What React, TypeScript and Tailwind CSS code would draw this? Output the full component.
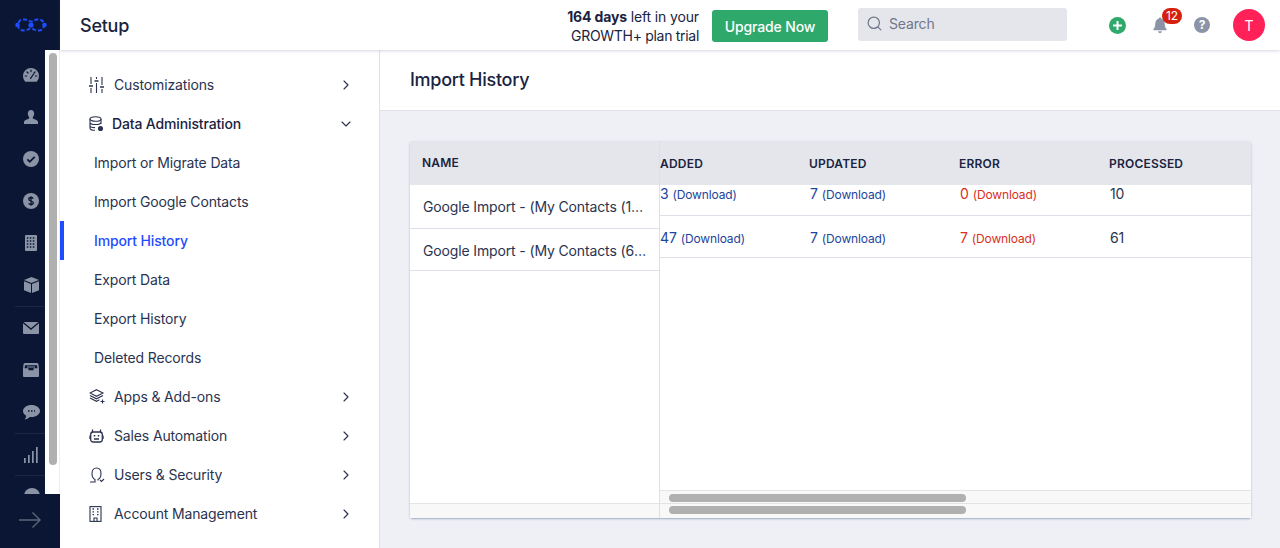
import React from 'react';
import { ChevronDown, ChevronRight, Search } from 'lucide-react';

const ICON = '#8b93a6';
const LINE = '#2a3350';

const GaugeIcon = () => (
  <svg width="16" height="14" viewBox="0 0 16 14">
    <path fill={ICON} d="M8 0a8 8 0 0 0-8 8c0 2.200.9 4.200 2.300 5.700h11.400A8 8 0 0 0 16 8a8 8 0 0 0-8-8z" />
    <path stroke="#0a1633" strokeWidth="1.200" fill="none" strokeLinecap="round" d="M8 2.200v1.400M4 4l1 1M12 4l-1 1M2.200 8h1.400M12.400 8h1.400M7.600 10.400l3-4.400" />
  </svg>
);
const UserIcon = () => (
  <svg width="14" height="14" viewBox="0 0 14 14">
    <path fill={ICON} d="M7 0C5 0 3.800 1.500 3.800 3.600c0 1.500.6 2.900 1.400 3.600v1.200L1.600 10C.6 10.500 0 11.300 0 12.200V14h14v-1.800c0-.9-.6-1.700-1.600-2.200L8.800 8.400V7.200c.8-.7 1.400-2.100 1.400-3.600C10.200 1.500 9 0 7 0z" />
  </svg>
);
const CheckIcon = () => (
  <svg width="16" height="16" viewBox="0 0 16 16">
    <circle cx="8" cy="8" r="8" fill={ICON} />
    <path d="M4.300 8.300l2.500 2.400 4.900-4.900" stroke="#0a1633" strokeWidth="1.700" fill="none" />
  </svg>
);
const DollarIcon = () => (
  <svg width="16" height="16" viewBox="0 0 16 16">
    <circle cx="8" cy="8" r="8" fill={ICON} />
    <path d="M10.200 5.600C9.800 4.800 9 4.500 8 4.500c-1.200 0-2.200.6-2.200 1.700 0 2.300 4.500 1.300 4.500 3.600 0 1.100-1 1.700-2.300 1.700-1.100 0-1.900-.4-2.300-1.200M8 3.200v9.600" stroke="#0a1633" strokeWidth="1.300" fill="none" />
  </svg>
);
const BuildingIcon = () => (
  <svg width="12" height="16" viewBox="0 0 12 16">
    <rect width="12" height="16" rx="1" fill={ICON} />
    <path stroke="#0a1633" strokeWidth="1.300" strokeDasharray="1.500 1.500" d="M1.800 3h9M1.800 6h9M1.800 9h9M1.800 12h9" />
  </svg>
);
const CubeIcon = () => (
  <svg width="15" height="16" viewBox="0 0 15 16">
    <path fill={ICON} d="M7.500 0L15 3 7.500 6 0 3z" />
    <path fill={ICON} d="M0 4.200l7 2.800v9L0 13.200zM15 4.200L8 7v9l7-2.800z" />
  </svg>
);
const MailIcon = () => (
  <svg width="16" height="12" viewBox="0 0 16 12">
    <path fill={ICON} d="M.6 0h14.800L8 6.300zM0 1.300l8 6.800 8-6.800V11a1 1 0 0 1-1 1H1a1 1 0 0 1-1-1z" />
  </svg>
);
const InboxIcon = () => (
  <svg width="16" height="14" viewBox="0 0 16 14">
    <path fill={ICON} d="M2 0h12a1.500 1.500 0 0 1 1.500 1.500L16 6v7a1 1 0 0 1-1 1H1a1 1 0 0 1-1-1V6l.5-4.500A1.500 1.500 0 0 1 2 0z" />
    <path fill="#0a1633" d="M2 2.200h12l.4 3H10.500v2h-5v-2H1.600z" />
    <path fill={ICON} d="M4 3.500h8v1H4z" />
  </svg>
);
const ChatIcon = () => (
  <svg width="17" height="15" viewBox="0 0 17 15">
    <path fill={ICON} d="M8.500 0C3.800 0 0 2.700 0 6c0 1.900 1.300 3.600 3.200 4.700-.1 1.400-.8 2.700-1.600 3.800 1.700-.2 3.700-1.200 5.100-2.600.6.100 1.200.1 1.800.1 4.700 0 8.500-2.700 8.500-6S13.200 0 8.500 0z" />
    <path stroke="#0a1633" strokeWidth="1.500" strokeDasharray="1.500 1.500" d="M5 6h7" />
  </svg>
);
const BarsIcon = () => (
  <svg width="14" height="16" viewBox="0 0 14 16" fill={ICON}>
    <rect x="0" y="11" width="1.700" height="5" />
    <rect x="4" y="8" width="1.700" height="8" />
    <rect x="8" y="4" width="1.700" height="12" />
    <rect x="12" y="0" width="1.700" height="16" />
  </svg>
);

const Logo = () => (
  <svg width="32" height="16" viewBox="0 0 32 16" fill="none">
    <path stroke="#1f4cff" strokeWidth="2" strokeDasharray="4 2" d="M8 2.500h2c2.500 0 3.500 2 6 2s3.500-2 6-2h2c3 0 5 2.500 5 5.500s-2 5.500-5 5.500h-2c-2.500 0-3.500-2-6-2s-3.500 2-6 2H8c-3 0-5-2.500-5-5.500s2-5.500 5-5.500z" />
    <circle cx="2.500" cy="8" r="2.300" fill="#1f4cff" />
    <circle cx="16" cy="8" r="2.600" fill="#1f4cff" />
    <circle cx="29.500" cy="8" r="2.300" fill="#1f4cff" />
  </svg>
);

const SlidersIcon = () => (
  <svg width="15" height="16" viewBox="0 0 15 16" fill="none" stroke={LINE} strokeWidth="1.100">
    <path d="M2 0v7M2 11v5M7.500 0v2M7.500 6v10M13 0v8M13 12v4" />
    <path d="M0 9h4M5.500 4h4M11 10h4" strokeWidth="1.500" />
  </svg>
);
const DatabaseIcon = () => (
  <svg width="15" height="16" viewBox="0 0 15 16" fill="none" stroke={LINE} strokeWidth="1.100">
    <ellipse cx="6.500" cy="3" rx="5.500" ry="2.300" />
    <path d="M1 3v9c0 1.200 2.300 2.300 5 2.300M12 3v5M1 6.200c0 1.200 2.500 2.300 5.500 2.300s5.500-1.100 5.500-2.300M1 9.400c0 1.200 2.300 2.200 5 2.200" />
    <circle cx="11.500" cy="12.500" r="2" fill={LINE} />
  </svg>
);
const LayersPlusIcon = () => (
  <svg width="16" height="15" viewBox="0 0 16 15" fill="none" stroke={LINE} strokeWidth="1.100">
    <path d="M7.500.7L14 4 7.500 7.300 1 4z" />
    <path d="M1 6.500l6.500 3.300L14 6.500M1 9l6.500 3.300 3-1.500" />
    <path d="M13.500 10.500v4M11.500 12.500h4" />
  </svg>
);
const BotIcon = () => (
  <svg width="15" height="14" viewBox="0 0 15 14" fill="none" stroke={LINE} strokeWidth="1.300">
    <rect x="1.700" y="3" width="11.600" height="10" rx="2.500" />
    <path d="M3.500 3V.5M11.500 3V.5M0 6.500v3.500M15 6.500v3.500M5 10h5" />
    <path d="M5.500 6v1.500M9.500 6v1.500" strokeWidth="1.600" />
  </svg>
);
const UsersSecIcon = () => (
  <svg width="16" height="16" viewBox="0 0 16 16" fill="none" stroke={LINE} strokeWidth="1.100">
    <path d="M1 15h5v-2.500C4 11.500 3 9.500 3 6.500 3 3 5 1 7.500 1S12 3 12 6.500c0 3-1 5-3 6v1" />
    <path d="M11 13l1.500 1.500L15 12" />
  </svg>
);
const OfficeIcon = () => (
  <svg width="13" height="16" viewBox="0 0 13 16" fill="none" stroke={LINE} strokeWidth="1.100">
    <rect x="1" y=".6" width="11" height="14.800" />
    <path d="M3.500 3h1.500M8 3h1.500M3.500 5.800h1.500M8 5.800h1.500M3.500 8.600h1.500M8 8.600h1.500" strokeWidth="1.300" />
    <path d="M5 15.500v-3.500h3v3.500" />
  </svg>
);

type NavItem = { label: string; icon?: React.ReactNode; active?: boolean; open?: boolean };

const items: NavItem[] = [
  { label: 'Customizations', icon: <SlidersIcon /> },
  { label: 'Data Administration', icon: <DatabaseIcon />, open: true },
  { label: 'Import or Migrate Data' },
  { label: 'Import Google Contacts' },
  { label: 'Import History', active: true },
  { label: 'Export Data' },
  { label: 'Export History' },
  { label: 'Deleted Records' },
  { label: 'Apps & Add-ons', icon: <LayersPlusIcon /> },
  { label: 'Sales Automation', icon: <BotIcon /> },
  { label: 'Users & Security', icon: <UsersSecIcon /> },
  { label: 'Account Management', icon: <OfficeIcon /> },
];

const Rail = () => (
  <div className="flex w-[60px] shrink-0 flex-col bg-[#0a1633]">
    <div className="flex h-[50px] shrink-0 items-center pl-[15px]">
      <Logo />
    </div>
    <div className="flex h-[444px] shrink-0">
      <div className="flex w-[45px] flex-col overflow-hidden pt-[4px] pl-[15px]">
        {[<GaugeIcon />, <UserIcon />, <CheckIcon />, <DollarIcon />, <BuildingIcon />, <CubeIcon />].map((icon, i) => (
          <div key={i} className="flex h-[42px] shrink-0 items-center justify-center pl-[2px]">{icon}</div>
        ))}
        <div className="h-px shrink-0 bg-[#1c2740]" />
        {[<MailIcon />, <InboxIcon />, <ChatIcon />].map((icon, i) => (
          <div key={i} className="flex h-[42px] shrink-0 items-center justify-center pl-[2px]">{icon}</div>
        ))}
        <div className="h-px shrink-0 bg-[#1c2740]" />
        <div className="flex h-[41px] shrink-0 items-center justify-center pl-[2px]"><BarsIcon /></div>
        <div className="h-px shrink-0 bg-[#1c2740]" />
        <div className="mt-[12px] ml-[9px] h-4 w-4 shrink-0 rounded-full bg-[#8b93a6]" />
      </div>
      <div className="w-[15px] border-r border-[#eeeeee] bg-white pt-[3px] pl-[4px]">
        <div className="h-[412px] w-2 rounded bg-[#b0b0b0]" />
      </div>
    </div>
    <div className="flex flex-1 items-center pl-[19px] pb-[2px]">
      <svg width="22" height="16" viewBox="0 0 22 16" fill="none" stroke="#5d6679" strokeWidth="1.400">
        <path d="M0 8h21M13.500 .5L21 8l-7.500 7.500" />
      </svg>
    </div>
  </div>
);

const Sidebar = () => (
  <div className="w-[320px] shrink-0 border-r border-[#dfe1e8] bg-white pt-[15px] text-[14px] text-[#2a3350]">
    {items.map(item => (
      <div key={item.label} className={`relative flex h-[39px] items-center pr-[25px] ${item.icon ? 'pl-[29px]' : 'pl-[34px]'}`}>
        {item.active && <div className="absolute top-0 bottom-0 left-0 w-1 bg-[#1f4cff]" />}
        {item.icon && <span className="flex w-[25px] shrink-0">{item.icon}</span>}
        <span className={`${item.active ? 'font-medium text-[#1f4cff]' : ''} ${item.open ? '-ml-[2px] font-medium text-[#1a2340]' : ''}`}>{item.label}</span>
        {item.icon && (
          <span className="ml-auto">
            {item.open ? <ChevronDown size={16} strokeWidth={1.7} /> : <ChevronRight size={16} strokeWidth={1.7} />}
          </span>
        )}
      </div>
    ))}
  </div>
);

const Cell = ({ value, tone }: { value: string; tone: 'blue' | 'red' }) => (
  <div className={`flex items-baseline gap-[4px] ${tone === 'blue' ? 'text-[#1d459c]' : 'text-[#d9301e]'}`}>
    <span className="text-[14px]">{value}</span>
    <span className="text-[12px]">(Download)</span>
  </div>
);

const rows = [
  { added: '3', updated: '7', error: '0', processed: '10', h: 'h-[43px] pb-[2px]' },
  { added: '47', updated: '7', error: '7', processed: '61', h: 'h-[42px] pt-[2px]' },
];

const ScrollStrip = ({ className }: { className: string }) => (
  <div className={`shrink-0 border-t border-[#e3e4e8] bg-[#f8f8f8] pl-[9px] ${className}`}>
    <div className="h-2 w-[297px] rounded bg-[#b0b0b0]" />
  </div>
);

const HistoryTable = () => (
  <div className="flex h-[377px] rounded-[3px] bg-white shadow-[0_1px_2px_rgba(100,120,160,0.6)]">
    <div className="flex w-[250px] shrink-0 flex-col border-r border-[#dfe0e7]">
      <div className="flex h-[44px] shrink-0 items-center bg-[#e5e6ec] pl-3 text-[12px] font-semibold tracking-[0.2px] text-[#1a2340]">NAME</div>
      <div className="flex h-[44px] shrink-0 items-center border-b border-[#dfe0e7] pr-[11px] pl-[13px] text-[14px] text-[#2a3350]">
        <span className="truncate">Google Import - (My Contacts (1).csv)</span>
      </div>
      <div className="flex h-[42px] shrink-0 items-center border-b border-[#dfe0e7] pt-[1px] pr-[11px] pl-[13px] text-[14px] text-[#2a3350]">
        <span className="truncate">Google Import - (My Contacts (6).csv)</span>
      </div>
      <div className="flex-1" />
      <div className="h-[15px] shrink-0 border-t border-[#e3e4e8] bg-[#f8f8f8]" />
    </div>
    <div className="flex min-w-0 flex-1 flex-col">
      <div className="grid h-[44px] shrink-0 grid-cols-[149px_150px_150px_1fr] items-center bg-[#e5e6ec] pt-[2px] text-[12px] font-semibold tracking-[0.2px] text-[#1a2340]">
        <span>ADDED</span>
        <span>UPDATED</span>
        <span>ERROR</span>
        <span>PROCESSED</span>
      </div>
      <div className="min-h-0 flex-1 overflow-hidden">
        <div className="-mt-[12px]">
          {rows.map(row => (
            <div key={row.added} className={`grid grid-cols-[150px_150px_150px_1fr] items-center border-b border-[#dfe0e7] ${row.h}`}>
              <Cell value={row.added} tone="blue" />
              <Cell value={row.updated} tone="blue" />
              <Cell value={row.error} tone="red" />
              <span className="text-[14px] text-[#2a3350]">{row.processed}</span>
            </div>
          ))}
        </div>
      </div>
      <ScrollStrip className="h-[13px] pt-[3px]" />
      <ScrollStrip className="h-[15px] pt-[2px]" />
    </div>
  </div>
);

export default function App() {
  return (
    <div className="flex h-[548px] w-[1280px] overflow-hidden bg-white font-['Inter',sans-serif] tracking-[-0.14px]">
      <Rail />
      <div className="flex min-w-0 flex-1 flex-col">
        <header className="relative z-10 flex h-[50px] shrink-0 items-center bg-white pl-5 shadow-[0_1px_3px_rgba(90,100,130,0.25)]">
          <h1 className="mt-[1px] text-[18px] font-medium tracking-[-0.25px] text-[#1a2340]">Setup</h1>
          <div className="mt-[2px] ml-auto text-right text-[14px] leading-[19px] text-[#1a2340]">
            <div><span className="font-bold">164 days</span> left in your</div>
            <div className="tracking-[-0.3px]">GROWTH+ plan trial</div>
          </div>
          <button className="mt-[2px] ml-[13px] h-8 w-[116px] rounded-[3px] bg-[#2ea86b] text-[14px] font-medium text-white">Upgrade Now</button>
          <div className="mb-[2px] ml-[30px] flex h-[33px] w-[209px] items-center gap-[6px] rounded-[3px] bg-[#e5e6ec] pb-[2px] pl-2 text-[14px] text-[#6f7689]">
            <Search size={17} strokeWidth={1.7} />
            <span>Search</span>
          </div>
          <div className="ml-[42px] flex h-[17px] w-[17px] items-center justify-center rounded-full bg-[#2ea86b]">
            <svg width="9" height="9" viewBox="0 0 9 9" stroke="white" strokeWidth="2"><path d="M4.500 0v9M0 4.500h9" /></svg>
          </div>
          <div className="relative ml-[26px] flex w-4 justify-center">
            <svg width="17" height="17" viewBox="0 0 17 17" fill="#8b93a6">
              <path d="M8.500 0c-.7 0-1.100.5-1.100 1.100C5 1.700 3.500 3.700 3.500 6.500c0 3-.9 4.900-2 6.100-.3.400-.1 1 .4 1h13.200c.5 0 .7-.6.4-1-1.100-1.200-2-3.100-2-6.100 0-2.800-1.500-4.800-3.900-5.400C9.600.5 9.200 0 8.500 0zM6.500 14.500a2 2 0 0 0 4 0z" />
            </svg>
            <span className="absolute -top-[9px] left-[10px] flex h-4 w-5 items-center justify-center rounded-full bg-[#d6200e] text-[12px] text-white">12</span>
          </div>
          <div className="ml-[26px] flex h-4 w-4 items-center justify-center rounded-full bg-[#8b93a6] text-[12px] font-bold text-white">?</div>
          <div className="mr-[15px] ml-[23px] flex h-8 w-8 items-center justify-center rounded-full bg-[#ff2158] text-[14px] text-white">T</div>
        </header>
        <div className="flex min-h-0 flex-1">
          <Sidebar />
          <main className="flex min-w-0 flex-1 flex-col bg-[#eff0f5]">
            <div className="flex h-[61px] shrink-0 items-center border-b border-[#dfe1e8] bg-white pb-[1px] pl-[30px] text-[18px] font-medium tracking-[-0.28px] text-[#1a2340]">Import History</div>
            <div className="pt-[30px] pr-[29px] pl-[30px]">
              <HistoryTable />
            </div>
          </main>
        </div>
      </div>
    </div>
  );
}
